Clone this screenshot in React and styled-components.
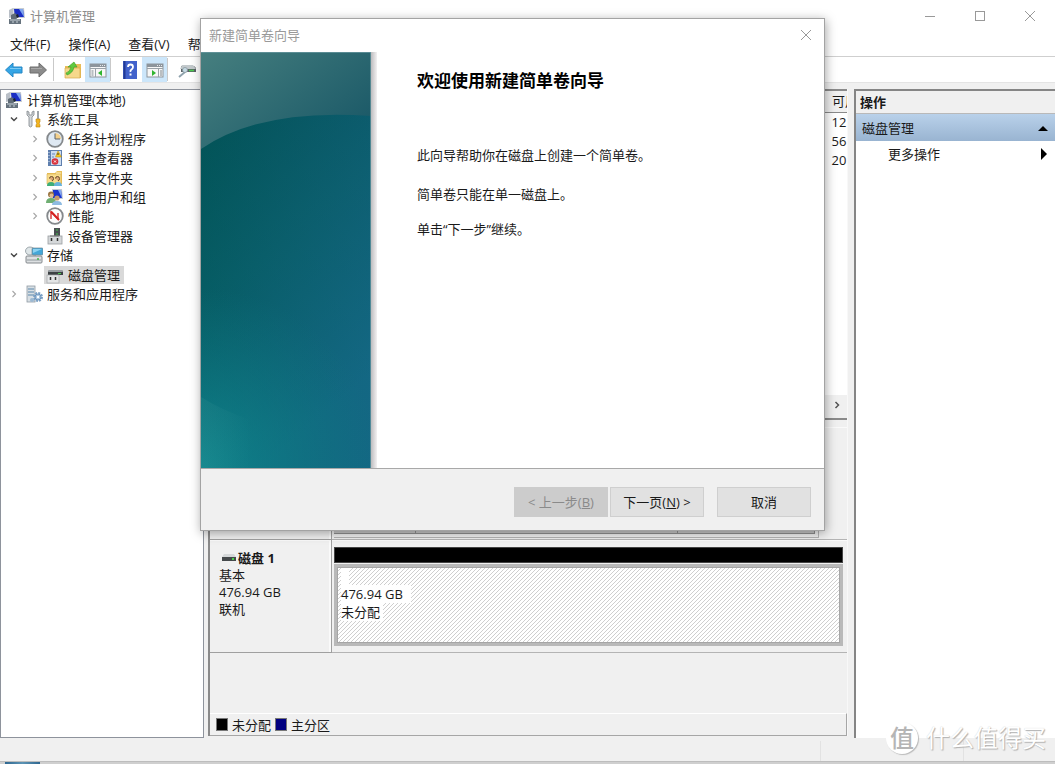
import React from "react";
import styled, { createGlobalStyle, css } from "styled-components";

const GlobalStyle = createGlobalStyle`
  * { box-sizing: border-box; }
  html, body, #root { height: 100%; }
  body {
    margin: 0;
    overflow: hidden;
    background: #f0f0f0;
    color: #1a1a1a;
    font-family: "Open Sans", "Noto Sans CJK SC", sans-serif;
    font-size: 13px;
    line-height: 18px;
  }
  button { font: inherit; color: inherit; margin: 0; padding: 0; border: 0; background: none; }
  ul { list-style: none; margin: 0; padding: 0; }
  h1, h2, p { margin: 0; font-size: inherit; }
  svg { display: block; flex: none; }
`;

const Desktop = styled.div`
  position: relative;
  display: flex;
  flex-direction: column;
  height: 100vh;
  overflow: hidden;
`;

/* ---------- window chrome ---------- */
const TitleBar = styled.header`
  display: flex;
  align-items: center;
  height: 33px;
  padding: 0 0 2px 8px;
  background: #fff;
  color: #8c8c8c;
`;
const WindowTitle = styled.h1`
  flex: 1;
  margin-left: 4px;
  font-weight: 400;
`;
const CaptionButton = styled.button`
  display: flex;
  align-items: center;
  justify-content: center;
  width: 50px;
  height: 31px;
  color: #999;
`;
const MenuBar = styled.nav`
  display: flex;
  gap: 18px;
  height: 24px;
  padding: 2px 10px 3px;
  background: #fff;
  border-bottom: 1px solid #cfcfcf;
`;
const MenuItem = styled.button`
  white-space: nowrap;
`;
const ToolBar = styled.div`
  display: flex;
  align-items: center;
  height: 26px;
  padding-left: 5px;
  background: #fff;
  border-bottom: 1px solid #e4e4e4;
`;
const ToolButton = styled.button`
  display: flex;
  align-items: center;
  justify-content: center;
  width: ${(p) => p.$w || 25}px;
  height: 25px;
  background: ${(p) => (p.$on ? "#cce6fa" : "none")};
`;
const Divider = styled.span`
  width: 1px;
  height: 23px;
  margin-right: ${(p) => p.$gap || 0}px;
  background: #c9c9c9;
`;
const Body = styled.main`
  flex: 1;
  min-height: 0;
  display: flex;
  padding-top: 6px;
`;
const StatusBar = styled.footer`
  display: flex;
  justify-content: flex-end;
  height: 24px;
  padding-top: 3px;
  border-bottom: 1px solid #bdbdbd;
`;
const StatusCell = styled.span`
  width: ${(p) => p.$w}px;
  border-left: 1px solid #e2e2e2;
`;
const TaskStrip = styled.div`
  height: 2px;
  padding-left: 5px;
  background: #cfcfcf;
`;
const TaskAccent = styled.div`
  width: 35px;
  height: 2px;
  background: linear-gradient(90deg, #2f6790, #5c93b4, #2f6790);
`;

/* ---------- navigation tree ---------- */
const TreePanel = styled.nav`
  width: 204px;
  flex: none;
  background: #fff;
  border: 1px solid #8e939c;
`;
const TreeList = styled.ul`
  display: grid;
  grid-auto-rows: 1fr;
  height: 214px;
`;
const TreeRow = styled.li`
  display: flex;
  align-items: center;
  padding-left: ${(p) => [2, 7, 28][p.$level]}px;
`;
const Toggle = styled.span`
  display: flex;
  justify-content: center;
  width: 12px;
  margin-right: 3px;
`;
const TreeLabel = styled.a`
  display: flex;
  align-items: center;
  gap: 4px;
  padding: 0 4px 0 2px;
  color: inherit;
  text-decoration: none;
  white-space: nowrap;
  background: ${(p) => (p.$selected ? "#d9d9d9" : "none")};
`;

/* ---------- centre ---------- */
const Centre = styled.section`
  flex: 1;
  min-width: 0;
  display: flex;
  flex-direction: column;
  margin: 0 6px 2px 4px;
  border-left: 2px solid #8a8a8a;
  border-right: 1px solid #f8f8f8;
`;
const VolumePane = styled.div`
  flex: 0 1 331px;
  display: flex;
  flex-direction: column;
  background: #fff;
  border-top: 2px solid #8a8a8a;
  border-bottom: 2px solid #8a8a8a;
`;
const VolumeTable = styled.table`
  align-self: flex-end;
  width: 23px;
  table-layout: fixed;
  border-collapse: collapse;
  th, td {
    height: 19px;
    padding: 0 0 0 7px;
    overflow: hidden;
    white-space: nowrap;
    text-align: left;
    font-weight: 400;
    line-height: 18px;
  }
  th {
    height: 21px;
    background: #f0f0f0;
    border-left: 1px solid #8a8a8a;
    border-bottom: 1px solid #8a8a8a;
  }
`;
const HScroll = styled.div`
  display: flex;
  justify-content: flex-end;
  height: 23px;
  margin-top: auto;
  background: #f0f0f0;
`;
const ScrollButton = styled.button`
  display: flex;
  align-items: center;
  justify-content: center;
  width: 20px;
  height: 20px;
`;
const DiskPane = styled.div`
  flex: 1;
  min-height: 0;
  padding-top: 7px;
`;
const DiskRow = styled.div`
  display: flex;
  height: 113px;
`;
const DiskInfo = styled.div`
  width: 122px;
  padding: 10px 0 0 9px;
  line-height: 17px;
  border: 1px solid #a0a0a0;
  border-width: 0 1px 1px 0;
  box-shadow: inset -2px 1px 0 #fafafa;
`;
const DiskName = styled.h2`
  display: flex;
  align-items: center;
  gap: 1px;
  padding-left: 2px;
  font-weight: 700;
`;
const DiskMap = styled.div`
  flex: 1;
  display: flex;
  flex-direction: column;
  padding: 7px 4px ${(p) => (p.$tight ? 1 : 6)}px 2px;
  border-bottom: 1px solid #b4b4b4;
  box-shadow: inset 0 1px 0 #fafafa;
`;
const DiskBar = styled.div`
  height: 16px;
  background: #000;
  border: 1px solid #444;
`;
const Unallocated = styled.div`
  flex: 1;
  display: flex;
  flex-direction: column;
  align-items: flex-start;
  margin-top: 1px;
  padding-left: 4px;
  border: 3px solid #b9b9b9;
  outline: 1px solid #a6a6a6;
  outline-offset: -4px;
  background: #fff linear-gradient(135deg, #cfcfcf 0 15%, #fff 15% 50%, #cfcfcf 50% 65%, #fff 65%) 0 0 / 4px 4px;
`;
const HatchText = styled.span`
  min-width: 8px;
  min-height: 18px;
  padding-right: ${(p) => p.$pad || 0}px;
  background: #fff;
`;
const Partitions = styled.div`
  flex: 1;
  display: flex;
  margin-right: 24px;
  border: 1px solid #b4b4b4;
  border-width: 0 1px 1px 0;
  padding: 0 3px 3px 0;
`;
const Partition = styled.div`
  flex: ${(p) => p.$grow};
  background: #c8c8c8;
  border: 1px solid #8f8f8f;
  border-left: 0;
`;
const Legend = styled.div`
  display: flex;
  align-items: center;
  gap: 4px;
  height: 23px;
  padding-left: 6px;
  border: 1px solid #a6a6a6;
  border-top-color: #fff;
  border-left: 0;
`;
const Swatch = styled.span`
  width: 12px;
  height: 13px;
  border: 1px solid #777;
  background: ${(p) => p.$color};
`;

/* ---------- actions ---------- */
const Actions = styled.aside`
  width: 201px;
  flex: none;
  background: #fff;
  border-top: 2px solid #858585;
  border-left: 2px solid #858585;
`;
const ActionsTitle = styled.h2`
  height: 23px;
  padding: 2px 4px;
  background: #f0f0f0;
  border-bottom: 1px solid #b9b9b9;
`;
const ActionButton = styled.button`
  display: flex;
  align-items: center;
  justify-content: space-between;
  width: 100%;
  height: 26px;
  padding: 0 7px 0 32px;
  ${(p) => p.$group && css`
    height: 27px;
    padding-left: 6px;
    background: linear-gradient(#b9d1ea, #99b4d1);
  `}
`;

/* ---------- wizard dialog ---------- */
const Dialog = styled.section`
  position: absolute;
  z-index: 2;
  top: 18px;
  left: 200px;
  width: 625px;
  border: 1px solid #a3a3a3;
  background: #fff;
  box-shadow: 1px 2px 10px rgba(0, 0, 0, 0.35);
`;
const DialogTitle = styled.header`
  display: flex;
  align-items: center;
  justify-content: space-between;
  height: 33px;
  padding: 0 0 2px 8px;
  color: #999;
  h2 { font-weight: 400; }
`;
const DialogClose = styled(CaptionButton)`
  width: 36px;
`;
const DialogBody = styled.div`
  display: flex;
  height: 416px;
`;
const BannerEdge = styled.div`
  width: 6px;
  background: linear-gradient(90deg, #bdbcbe, #f3f1f2);
`;
const WizardText = styled.div`
  padding: 17px 0 0 40px;
  h2 { font-size: 17px; line-height: 24px; color: #000; }
  h2 + p { margin-top: 53px; }
  p + p { margin-top: 21px; }
  p + p + p { margin-top: 17px; }
`;
const DialogFooter = styled.footer`
  display: flex;
  justify-content: flex-end;
  gap: 2px;
  padding: 18px 13px 13px;
  background: #f0f0f0;
  border-top: 1px solid #a8a8a8;
`;
const PushButton = styled.button`
  width: 94px;
  height: 30px;
  margin-left: ${(p) => (p.$apart ? 11 : 0)}px;
  background: #e1e1e1;
  border: 1px solid #cfcfcf;
  &:disabled { background: #ccc; border-color: #ccc; color: #8a8a8a; }
`;

/* ---------- watermark ---------- */
const Watermark = styled.div`
  position: absolute;
  z-index: 3;
  right: 9px;
  bottom: 9px;
  display: flex;
  align-items: center;
  gap: 8px;
  color: #fff;
  font-size: 24px;
  line-height: 34px;
  text-shadow: 1px 1px 1px #b0b0b0, 0 0 1px #ccc;
`;
const Seal = styled.span`
  width: 32px;
  height: 32px;
  border-radius: 50%;
  background: #fff;
  color: #b5b5b5;
  font-size: 24px;
  font-weight: 500;
  line-height: 31px;
  text-align: center;
  text-shadow: none;
  box-shadow: 1px 1px 1px #bbb;
`;

/* ---------- drawings ---------- */
const Icon = ({ children, w = 18, h = 18 }) => (
  <svg width={w} height={h} viewBox={`0 0 ${w} ${h}`} aria-hidden="true">{children}</svg>
);
const ComputerIcon = () => (
  <Icon>
    <path d="M1 3l4-2v9l-4 1z" fill="#b9bfc7" />
    <path d="M5 1l11 0 1 10-11 0z" fill="#c7ccd2" />
    <path d="M6 2h9l1 8H7z" fill="#1b2fc4" />
    <path d="M11 2h4l1 8z" fill="#7fa6ee" />
    <path d="M3 8l4-2 3 3-2 4-5 0z" fill="#5f6b76" />
    <path d="M8 8l2-1 1 3-2 1z" fill="#1c2433" />
    <rect x="1" y="12" width="12" height="5" fill="#66727d" />
    <path d="M2 13h10M4 15h2M8 15h2" stroke="#c9d2d9" />
  </Icon>
);
const ToolsIcon = () => (
  <Icon>
    <path d="M2 1v4l2 2v9q1.500 2 3 0V7l2-2V1L7 2v3H4V2z" fill="#d3d7da" stroke="#80868c" strokeWidth=".8" />
    <path d="M12 1h2v8h-2z" fill="#9fa5aa" />
    <path d="M11 9h4v3l-1 1 1 2v2h-4v-2l1-2-1-1z" fill="#f3b521" stroke="#b9800c" strokeWidth=".6" />
  </Icon>
);
const ClockIcon = () => (
  <Icon>
    <circle cx="9" cy="9" r="7.800" fill="#dfe9f3" stroke="#85898c" strokeWidth="1.800" />
    <path d="M9 9V3a6 6 0 0 1 6 6z" fill="#f3cf8a" />
    <path d="M9 3.500V9h5" fill="none" stroke="#59636c" />
  </Icon>
);
const EventIcon = () => (
  <Icon>
    <rect x="2" y="1" width="14" height="16" fill="#5f7fae" />
    <rect x="5" y="2" width="10" height="14" fill="#cddcf0" />
    <path d="M3 3v12" stroke="#dce6f3" strokeDasharray="1 2" />
    <path d="M6 5h3M6 8h2M6 11h2" stroke="#6889b9" />
    <path d="M12 2l3.500 6h-6z" fill="#f7c81e" stroke="#b4870e" strokeWidth=".5" />
    <path d="M12 4v2" stroke="#333" />
    <circle cx="9" cy="12.500" r="3.300" fill="#d9303a" />
    <path d="M8 11.500l2 2m0-2l-2 2" stroke="#fff" />
  </Icon>
);
const SharedIcon = () => (
  <Icon>
    <path d="M1 4h8l2-2h5v13H1z" fill="#e8bf58" />
    <path d="M1 5h14v10H1z" fill="#f8dc8c" stroke="#d9ae4e" strokeWidth=".6" />
    <path d="M10 4h5" stroke="#fff3c9" />
    <path d="M3.500 9.500q0-2 2-2t2 2-1.500 2.500" fill="#d9a677" stroke="#6a4a2a" />
    <path d="M9.500 9.500q0-2 2-2t2 2-1.500 2.500" fill="#d9a677" stroke="#6a4a2a" />
    <path d="M1 17q0-4 4-4t4 4z" fill="#3fae78" />
    <path d="M8 17q0-4 4-4t4 4z" fill="#69b3dc" />
  </Icon>
);
const UsersIcon = () => (
  <Icon>
    <path d="M6 1l10 0 1 10-11 0z" fill="#c3cad3" />
    <path d="M7 2h8l1 8H7z" fill="#1b35cd" />
    <path d="M12 2h3l1 8z" fill="#86a9ef" />
    <circle cx="5" cy="6.500" r="3" fill="#9b7644" />
    <circle cx="5.500" cy="7.500" r="2" fill="#e2bd92" />
    <path d="M0 15q0-5 5-5t5 5z" fill="#6fae72" />
    <circle cx="11" cy="10" r="2.600" fill="#c69a6d" />
    <path d="M6 17q0-4 5-4t5 4z" fill="#8ebbe2" />
  </Icon>
);
const PerfIcon = () => (
  <Icon>
    <circle cx="9" cy="9" r="7.800" fill="#fdfdfd" stroke="#85898c" strokeWidth="1.800" />
    <path d="M5 12V5l7 7V6" fill="none" stroke="#d42020" strokeWidth="1.300" />
    <path d="M5 4.500l8 8.500" stroke="#d42020" strokeWidth="2" />
  </Icon>
);
const DeviceIcon = () => (
  <Icon>
    <rect x="8" y="1" width="6" height="9" fill="#4a4f52" />
    <path d="M10 3h2M11 6v2" stroke="#45c04c" />
    <rect x="2" y="9" width="14" height="8" fill="#d5d8da" stroke="#9a9ea1" strokeWidth=".8" />
    <path d="M5.500 11v3M11.500 11v3" stroke="#333" strokeWidth="1.500" />
    <path d="M4 9h9" stroke="#777" />
  </Icon>
);
const StorageIcon = () => (
  <Icon>
    <path d="M1 8l3-6q5-2 7 2v6z" fill="#b9c4c9" />
    <ellipse cx="5" cy="5" rx="4.500" ry="4" fill="#dfe6e8" stroke="#8b969b" strokeWidth=".8" />
    <rect x="7" y="2" width="11" height="7" rx="1" fill="#44a7d8" stroke="#77868f" strokeWidth=".7" />
    <path d="M8 3h9l-9 4z" fill="#8bd2f2" />
    <rect x="1" y="10" width="16" height="7" rx="1" fill="#dde0e2" stroke="#787e82" strokeWidth=".9" />
    <path d="M2 14h14" stroke="#92999d" />
    <path d="M13 12v2" stroke="#43b54a" strokeWidth="1.500" />
  </Icon>
);
const DiskMgmtIcon = () => (
  <Icon>
    <path d="M3 4h13l1 2v3H2V6z" fill="#3d4144" />
    <path d="M3 4h13l1 2H2z" fill="#979da1" />
    <path d="M12 7.500h3" stroke="#49cf4f" />
    <rect x="1" y="9" width="12" height="8" fill="#e3e5e6" stroke="#a7aaac" strokeWidth=".7" />
    <path d="M4.500 11v3M9.500 11v3" stroke="#333" strokeWidth="1.500" />
  </Icon>
);
const ServicesIcon = () => (
  <Icon>
    <rect x="2" y="1" width="8" height="16" fill="#d8dfe4" stroke="#8f9aa3" strokeWidth=".8" />
    <path d="M3 4h6M3 7h6M3 10h6" stroke="#5a87ab" />
    <circle cx="13" cy="12" r="4" fill="none" stroke="#7ba1c6" strokeWidth="2" strokeDasharray="2 1.100" />
    <circle cx="13" cy="12" r="3" fill="#a9c5df" stroke="#6c94bc" />
    <circle cx="13" cy="12" r="1.200" fill="#fff" />
    <circle cx="7" cy="15" r="2" fill="#9bb9d3" />
  </Icon>
);
const Arrow = ({ forward }) => (
  <Icon>
    <path
      d={forward ? "M17.500 9L10 2v4H1v6h9v4z" : "M.5 9L8 2v4h9v6H8v4z"}
      fill={forward ? "#8b8b8b" : "#35a5e5"}
      stroke={forward ? "#6c6c6c" : "#2586c4"}
    />
    <path d={forward ? "M2 7.500h11" : "M5 7.500h11"} stroke={forward ? "#a9a9a9" : "#7ccaf4"} />
  </Icon>
);
const FolderUpIcon = () => (
  <Icon>
    <path d="M1 5h8l2-2h6v14H1z" fill="#e8bd58" />
    <path d="M1 7h15v10H1z" fill="#f6d88b" stroke="#d7ab4a" strokeWidth=".7" />
    <path d="M2 12q4-1 5-6H4l6-5 3 5h-3q-1 6-7 8z" fill="#5fc93e" stroke="#3d9c25" strokeWidth=".6" />
  </Icon>
);
const PaneIcon = ({ right }) => (
  <Icon>
    <rect x="1" y="3" width="16" height="13" fill="#f7f7f7" stroke="#8d959c" />
    <path d="M1 4.500h16" stroke="#8d959c" strokeWidth="3" />
    <path d="M11 4.500h5" stroke="#e6eaee" strokeDasharray="1 1" />
    <path d={right ? "M12.500 7v9M1 7.500h16" : "M6.500 7v9M1 7.500h16"} stroke="#9aa2a8" />
    <path d={right ? "M14 10h2M14 12h2M14 14h2" : "M2.500 10h2M2.500 12h2M2.500 14h2"} stroke="#7d868d" />
    <path d={right ? "M6 9l4 3-4 3z" : "M13 9l-4 3 4 3z"} fill="#2fb52f" />
  </Icon>
);
const HelpIcon = () => (
  <Icon>
    <rect x="2" y="0" width="14" height="18" fill="#4262cb" />
    <path d="M3.500 0v18" stroke="#223a94" strokeWidth="2" />
    <path d="M7 6q0-2.500 2.500-2.500T12 6q0 1.500-1.500 2.500T9.500 11" fill="none" stroke="#fff" strokeWidth="1.800" />
    <rect x="8.500" y="12.500" width="2" height="2" fill="#fff" />
  </Icon>
);
const DriveToolIcon = () => (
  <Icon>
    <path d="M3 5h13l2 2v4H3z" fill="#5b6367" />
    <path d="M4 4h11l3 4H2z" fill="#c3c9cc" />
    <path d="M11 9.500h5" stroke="#4ccc50" strokeWidth="1.500" />
    <path d="M1 16l6-5" stroke="#8fa2ad" strokeWidth="2" />
    <circle cx="7" cy="9" r="2.500" fill="#c7dce6" stroke="#87969d" strokeWidth=".8" />
  </Icon>
);
const DriveIcon = () => (
  <Icon w={16} h={10}>
    <path d="M3 0h10l2 3H1z" fill="#d5d8d9" />
    <rect x="1" y="3" width="14" height="4" fill="#45494b" />
    <path d="M11 5h2" stroke="#46d34c" strokeWidth="2" />
  </Icon>
);
const Chevron = ({ open, color }) => (
  <Icon w={8} h={8}>
    <path d={open ? "M1 2.500l3 3 3-3" : "M2.500 1l3 3-3 3"} fill="none" stroke={color || (open ? "#4a4a4a" : "#a5a5a5")} strokeWidth={color || open ? 1.500 : 1.100} />
  </Icon>
);
const CloseGlyph = () => (
  <Icon w={12} h={12}><path d="M1 1l10 10M11 1L1 11" stroke="currentColor" /></Icon>
);
const Banner = () => (
  <svg width="170" height="416" viewBox="0 0 170 416" preserveAspectRatio="none" aria-hidden="true">
    <defs>
      <linearGradient id="base" x1="0" y1="0" x2=".35" y2="1">
        <stop offset=".15" stopColor="#034f56" />
        <stop offset=".55" stopColor="#0a5f6c" />
        <stop offset="1" stopColor="#136b86" />
      </linearGradient>
      <linearGradient id="side" x1="0" y1="0" x2="1" y2="0">
        <stop offset="0" stopColor="#005a58" stopOpacity=".35" />
        <stop offset="1" stopColor="#155f7d" stopOpacity=".3" />
      </linearGradient>
      <radialGradient id="glow" gradientUnits="userSpaceOnUse" cx="0" cy="416" r="180">
        <stop offset="0" stopColor="#108a90" stopOpacity=".85" />
        <stop offset="1" stopColor="#0c7a82" stopOpacity="0" />
      </radialGradient>
      <linearGradient id="sky" x1="0" y1="0" x2="1" y2=".7">
        <stop offset="0" stopColor="#467f7f" />
        <stop offset="1" stopColor="#1c5a68" />
      </linearGradient>
      <linearGradient id="sweep" x1="0" y1="0" x2="1" y2="0">
        <stop offset="0" stopColor="#5bb0aa" stopOpacity=".12" />
        <stop offset="1" stopColor="#5bb0aa" stopOpacity="0" />
      </linearGradient>
    </defs>
    <rect width="170" height="416" fill="url(#base)" />
    <rect width="170" height="416" fill="url(#side)" />
    <rect width="170" height="416" fill="url(#glow)" />
    <path d="M0 0H170V64Q60 56 0 97Z" fill="url(#sky)" />
    <path d="M0 345Q20 358 50 368V416H0Z" fill="url(#sweep)" />
    <path d="M0 .5H170M169.500 0V416" stroke="#6c9aa2" strokeOpacity=".7" />
  </svg>
);

const NODES = [
  { level: 0, icon: ComputerIcon, text: "计算机管理(本地)" },
  { level: 1, icon: ToolsIcon, text: "系统工具", toggle: "open" },
  { level: 2, icon: ClockIcon, text: "任务计划程序", toggle: "closed" },
  { level: 2, icon: EventIcon, text: "事件查看器", toggle: "closed" },
  { level: 2, icon: SharedIcon, text: "共享文件夹", toggle: "closed" },
  { level: 2, icon: UsersIcon, text: "本地用户和组", toggle: "closed" },
  { level: 2, icon: PerfIcon, text: "性能", toggle: "closed" },
  { level: 2, icon: DeviceIcon, text: "设备管理器" },
  { level: 1, icon: StorageIcon, text: "存储", toggle: "open" },
  { level: 2, icon: DiskMgmtIcon, text: "磁盘管理", selected: true },
  { level: 1, icon: ServicesIcon, text: "服务和应用程序", toggle: "closed" },
];

export default function App() {
  return (
    <Desktop>
      <GlobalStyle />
      <TitleBar>
        <ComputerIcon />
        <WindowTitle>计算机管理</WindowTitle>
        <CaptionButton aria-label="最小化"><Icon w={12} h={12}><path d="M1 6.500h10" stroke="currentColor" /></Icon></CaptionButton>
        <CaptionButton aria-label="最大化"><Icon w={12} h={12}><rect x="1.500" y="1.500" width="9" height="9" fill="none" stroke="currentColor" /></Icon></CaptionButton>
        <CaptionButton aria-label="关闭"><CloseGlyph /></CaptionButton>
      </TitleBar>
      <MenuBar>
        {["文件(F)", "操作(A)", "查看(V)", "帮助(H)"].map((m) => <MenuItem key={m}>{m}</MenuItem>)}
      </MenuBar>
      <ToolBar>
        <ToolButton $w={18} aria-label="后退"><Arrow /></ToolButton>
        <ToolButton $w={30} aria-label="前进"><Arrow forward /></ToolButton>
        <Divider $gap={6} />
        <ToolButton aria-label="上一级"><FolderUpIcon /></ToolButton>
        <ToolButton $on aria-label="控制台树"><PaneIcon /></ToolButton>
        <Divider $gap={6} />
        <ToolButton aria-label="帮助"><HelpIcon /></ToolButton>
        <ToolButton $on aria-label="操作窗格"><PaneIcon right /></ToolButton>
        <Divider $gap={6} />
        <ToolButton aria-label="磁盘"><DriveToolIcon /></ToolButton>
      </ToolBar>
      <Body>
        <TreePanel>
          <TreeList>
            {NODES.map(({ level, icon: NodeIcon, text, toggle, selected }) => (
              <TreeRow key={text} $level={level}>
                {level > 0 && <Toggle>{toggle && <Chevron open={toggle === "open"} />}</Toggle>}
                <TreeLabel href="#" $selected={selected}><NodeIcon />{text}</TreeLabel>
              </TreeRow>
            ))}
          </TreeList>
        </TreePanel>
        <Centre>
          <VolumePane>
            <VolumeTable>
              <thead><tr><th>可用</th></tr></thead>
              <tbody>
                {["12", "56", "20"].map((v) => <tr key={v}><td>{v}</td></tr>)}
              </tbody>
            </VolumeTable>
            <HScroll><ScrollButton aria-label="向右滚动"><Chevron color="#555" /></ScrollButton></HScroll>
          </VolumePane>
          <DiskPane>
            <DiskRow>
              <DiskInfo />
              <DiskMap $tight>
                <Partitions>
                  <Partition $grow={82} />
                  <Partition $grow={263} />
                  <Partition $grow={137} />
                </Partitions>
              </DiskMap>
            </DiskRow>
            <DiskRow>
              <DiskInfo>
                <DiskName><DriveIcon />磁盘 1</DiskName>
                <p>基本</p>
                <p>476.94 GB</p>
                <p>联机</p>
              </DiskInfo>
              <DiskMap>
                <DiskBar />
                <Unallocated>
                  <HatchText />
                  <HatchText $pad={8}>476.94 GB</HatchText>
                  <HatchText $pad={3}>未分配</HatchText>
                </Unallocated>
              </DiskMap>
            </DiskRow>
          </DiskPane>
          <Legend>
            <Swatch $color="#000" />未分配
            <Swatch $color="#000080" />主分区
          </Legend>
        </Centre>
        <Actions>
          <ActionsTitle>操作</ActionsTitle>
          <ActionButton $group>
            磁盘管理
            <Icon w={10} h={6}><path d="M0 6l5-5 5 5z" fill="#000" /></Icon>
          </ActionButton>
          <ActionButton>
            更多操作
            <Icon w={8} h={12}><path d="M1 0l6 6-6 6z" fill="#000" /></Icon>
          </ActionButton>
        </Actions>
      </Body>
      <StatusBar>
        <StatusCell $w={143} />
        <StatusCell $w={92} />
      </StatusBar>
      <TaskStrip><TaskAccent /></TaskStrip>

      <Dialog role="dialog" aria-labelledby="wizard-title">
        <DialogTitle>
          <h2 id="wizard-title">新建简单卷向导</h2>
          <DialogClose aria-label="关闭"><CloseGlyph /></DialogClose>
        </DialogTitle>
        <DialogBody>
          <Banner />
          <BannerEdge />
          <WizardText>
            <h2>欢迎使用新建简单卷向导</h2>
            <p>此向导帮助你在磁盘上创建一个简单卷。</p>
            <p>简单卷只能在单一磁盘上。</p>
            <p>单击“下一步”继续。</p>
          </WizardText>
        </DialogBody>
        <DialogFooter>
          <PushButton disabled>&lt; 上一步(<u>B</u>)</PushButton>
          <PushButton>下一页(<u>N</u>) &gt;</PushButton>
          <PushButton $apart>取消</PushButton>
        </DialogFooter>
      </Dialog>

      <Watermark><Seal>值</Seal>什么值得买</Watermark>
    </Desktop>
  );
}
